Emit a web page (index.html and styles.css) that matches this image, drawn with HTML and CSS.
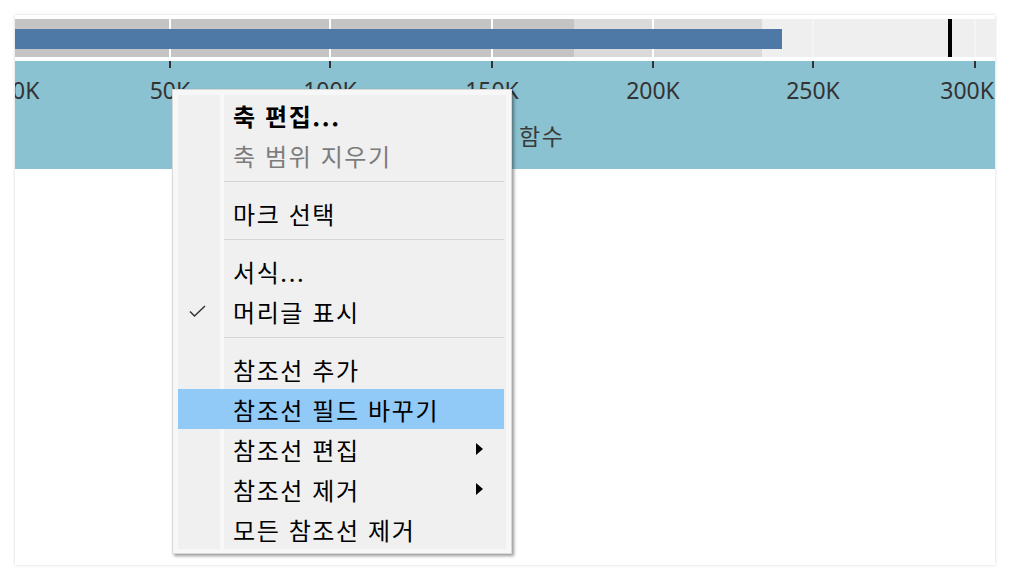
FILE: index.html
```html
<!DOCTYPE html>
<html lang="ko">
<head>
    <meta charset="UTF-8">
    <title>참조선</title>
    <link rel="stylesheet" href="styles.css">
</head>
<body>

    <div class="card">

        <div class="bullet">
            <div class="band band-dark"></div>
            <div class="band band-mid"></div>
            <div class="band band-light"></div>

            <div class="grid" style="left: 154px"></div>
            <div class="grid" style="left: 314px"></div>
            <div class="grid" style="left: 476px"></div>
            <div class="grid" style="left: 637px"></div>
            <div class="grid faint" style="left: 797px"></div>
            <div class="grid faint" style="left: 959px"></div>

            <div class="bar" style="width: 767px"></div>
            <div class="ref-line"></div>
        </div>

        <div class="axis">
            <div class="tick" style="left: 154px"></div>
            <div class="tick" style="left: 314px"></div>
            <div class="tick" style="left: 476px"></div>
            <div class="tick" style="left: 637px"></div>
            <div class="tick" style="left: 797px"></div>
            <div class="tick" style="left: 959px"></div>

            <span class="label first">0K</span>
            <span class="label" style="left: 155px">50K</span>
            <span class="label" style="left: 315px">100K</span>
            <span class="label" style="left: 477px">150K</span>
            <span class="label" style="left: 638px">200K</span>
            <span class="label" style="left: 798px">250K</span>
            <span class="label last">300K</span>

            <div class="axis-title">함수</div>
        </div>

    </div>

    <div class="menu">
        <div class="menu-inner">
            <div class="item bold"><span class="gutter"></span>축 편집...</div>
            <div class="item disabled"><span class="gutter"></span>축 범위 지우기</div>
            <div class="sep"></div>
            <div class="item"><span class="gutter"></span>마크 선택</div>
            <div class="sep"></div>
            <div class="item"><span class="gutter"></span>서식...</div>
            <div class="item">
                <span class="gutter">
                    <svg class="check" width="18" height="14" viewBox="0 0 18 14">
                        <path d="M1 6.5 L5.5 11 L16 1" fill="none" stroke="#333" stroke-width="1.5"/>
                    </svg>
                </span>머리글 표시
            </div>
            <div class="sep"></div>
            <div class="item"><span class="gutter"></span>참조선 추가</div>
            <div class="item active"><span class="gutter"></span>참조선 필드 바꾸기</div>
            <div class="item"><span class="gutter"></span>참조선 편집<span class="arrow"></span></div>
            <div class="item"><span class="gutter"></span>참조선 제거<span class="arrow"></span></div>
            <div class="item"><span class="gutter"></span>모든 참조선 제거</div>
        </div>
    </div>

</body>
</html>
```

FILE: styles.css
```css
body {
    margin: 0;
    background: #fff;
    font-family: "Noto Sans CJK KR", "Noto Sans", sans-serif;
}

.card {
    position: relative;
    margin: 15px;
    width: 980px;
    height: 550px;
    padding-top: 4px;
    box-sizing: border-box;
    overflow: hidden;
    background: #fff;
    box-shadow: 0 0 3px rgba(0, 0, 0, 0.18);
}

/* bullet row */
.bullet {
    position: relative;
    display: flex;
    height: 38px;
}

.band {
    height: 100%;
}

.band-dark {
    width: 559px;
    background: #c4c4c4;
}

.band-mid {
    width: 188px;
    background: #dadada;
}

.band-light {
    flex: 1;
    background: #efefef;
}

.grid {
    position: absolute;
    top: 0;
    bottom: 0;
    width: 2px;
    background: #fff;
}

.grid.faint {
    background: #f4f4f4;
}

.bar {
    position: absolute;
    left: 0;
    top: 10px;
    height: 20px;
    background: #4e79a7;
}

.ref-line {
    position: absolute;
    left: 933px;
    top: 0;
    bottom: 0;
    width: 4px;
    background: #000;
}

/* axis */
.axis {
    position: relative;
    margin-top: 4px;
    height: 108px;
    background: #8bc2d1;
    color: #333;
}

.tick {
    position: absolute;
    top: 0;
    width: 2px;
    height: 7px;
    background: #333;
}

.label {
    position: absolute;
    top: 14px;
    line-height: 30px;
    font-family: "Noto Sans", sans-serif;
    font-size: 23px;
    transform: translateX(-50%);
}

.label.first {
    left: -3px;
    transform: none;
}

.label.last {
    left: auto;
    right: 1px;
    transform: none;
}

.axis-title {
    position: absolute;
    left: 504px;
    top: 59px;
    line-height: 30px;
    font-size: 23px;
    letter-spacing: 1.5px;
    color: #3a3a3a;
}

/* context menu */
.menu {
    position: absolute;
    left: 172px;
    top: 89px;
    padding: 5px 5px 4px 5px;
    background: #f7f7f7;
    border: 1px solid #d8d8d8;
    box-shadow: 2px 2px 3px rgba(0, 0, 0, 0.4);
}

.menu-inner {
    width: 328px;
    background: linear-gradient(to right, #f0f0f0 42px, #f8f8f8 42px, #f8f8f8 46px, #f0f0f0 46px);
}

.item {
    position: relative;
    display: flex;
    align-items: center;
    height: 40px;
    margin-right: 2px;
    font-size: 24px;
    letter-spacing: 1.6px;
    color: #000;
    white-space: nowrap;
}

.item.bold {
    font-weight: bold;
}

.item.disabled {
    color: #7c7c7c;
}

.item.active {
    background: #91c9f7;
}

.gutter {
    display: flex;
    align-items: center;
    width: 55px;
    height: 100%;
    flex-shrink: 0;
}

.check {
    margin-left: 11px;
    margin-top: 2px;
}

.arrow {
    position: absolute;
    right: 21px;
    top: 14px;
    width: 0;
    height: 0;
    border-top: 6px solid transparent;
    border-bottom: 6px solid transparent;
    border-left: 7px solid #000;
}

.sep {
    margin: 6px 2px 11px 46px;
    height: 1px;
    background: #d4d4d4;
}
```
